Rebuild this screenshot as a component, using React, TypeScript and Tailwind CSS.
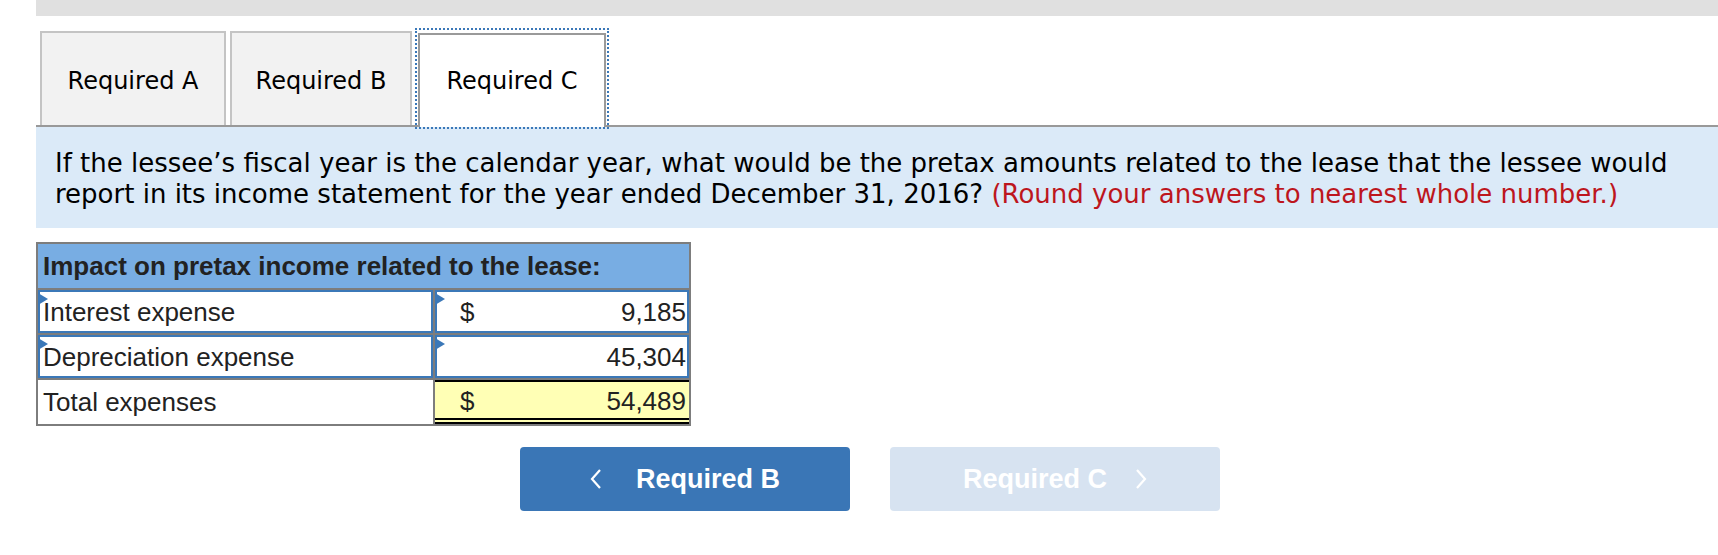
import React from "react";

const tabs = ["Required A", "Required B", "Required C"];

function Marker() {
  return (
    <svg width="10" height="12" viewBox="0 0 10 12" className="absolute left-[-2px] top-[1px]">
      <path d="M0 0 L10 6 L0 12 Z" fill="#3b78b8" />
    </svg>
  );
}

function Chevron({ dir }: { dir: "left" | "right" }) {
  return (
    <svg width="12" height="22" viewBox="0 0 12 22">
      <polyline
        points={dir === "left" ? "10,2 2,11 10,20" : "2,2 10,11 2,20"}
        fill="none"
        stroke="white"
        strokeWidth="2.2"
      />
    </svg>
  );
}

export default function App() {
  const sans = "font-['Liberation_Sans',Arial,sans-serif]";
  const verdana = "font-['DejaVu_Sans',Verdana,sans-serif]";

  return (
    <div className="w-[1718px] h-[555px] bg-white overflow-hidden">
      <div className="ml-[36px] h-[16px] bg-[#e0e0e0]" />

      <div className="ml-[36px] mt-[15px]">
        {/* tab strip */}
        <div className={`flex items-end gap-[4px] pl-[4px] border-b-2 border-[#999] ${verdana}`}>
          {tabs.map((t, i) =>
            i === 2 ? (
              <div key={t} className="relative ml-[2px]">
                <div className="absolute inset-x-[-3px] top-[-5px] bottom-[-4px] border-2 border-dotted border-[#3b78b8]" />
                <div className="w-[188px] h-[94px] mb-[-2px] bg-white border-2 border-b-0 border-[#9a9a9a] flex items-center justify-center text-[24px] text-black">
                  {t}
                </div>
              </div>
            ) : (
              <div
                key={t}
                className={`${i === 0 ? "w-[186px]" : "w-[182px]"} h-[94px] pt-[4px] bg-[#f2f2f2] border-2 border-b-0 border-[#c4c4c4] flex items-center justify-center text-[24px] text-black`}
              >
                {t}
              </div>
            )
          )}
        </div>

        {/* question */}
        <div className={`bg-[#dbeaf8] h-[101px] pl-[19px] pr-[10px] pt-[21px] text-[26px] leading-[31px] text-black whitespace-nowrap ${verdana}`}>
          If the lessee’s fiscal year is the calendar year, what would be the pretax amounts related to the lease that the lessee would
          <br />
          report in its income statement for the year ended December 31, 2016?{" "}
          <span className="text-[#bd161d]">(Round your answers to nearest whole number.)</span>
        </div>

        {/* table */}
        <div className={`mt-[14px] w-[655px] border-2 border-[#7d7d7d] bg-[#7d7d7d] flex flex-col gap-[2px] text-[#222] leading-none ${sans}`}>
          <div className="h-[44px] bg-[#78ade3] flex items-center px-[5px] text-[26px] font-bold">
            Impact on pretax income related to the lease:
          </div>

          <div className="grid grid-cols-[395px_1fr] grid-rows-[43px] gap-[2px]">
            <div className="relative bg-white border-2 border-[#3b78b8] flex items-center pl-[3px] text-[26px]">
              <Marker />
              Interest expense
            </div>
            <div className="relative bg-white border-2 border-[#3b78b8] flex items-center justify-between pl-[23px] pr-[1px] text-[26px]">
              <Marker />
              <span>$</span>
              <span>9,185</span>
            </div>
          </div>

          <div className="grid grid-cols-[395px_1fr] grid-rows-[43px] gap-[2px]">
            <div className="relative bg-white border-2 border-[#3b78b8] flex items-center pl-[3px] text-[26px]">
              <Marker />
              Depreciation expense
            </div>
            <div className="relative bg-white border-2 border-[#3b78b8] flex items-center justify-end pr-[1px] text-[26px]">
              <Marker />
              <span>45,304</span>
            </div>
          </div>

          <div className="grid grid-cols-[395px_1fr] grid-rows-[44px] gap-[2px]">
            <div className="bg-white flex items-center pl-[5px] text-[26px]">Total expenses</div>
            <div className="bg-[#ffffb5] border-t-2 border-b-[6px] border-double border-black flex items-center justify-between pl-[25px] pr-[3px] pt-[2px] text-[26px]">
              <span>$</span>
              <span>54,489</span>
            </div>
          </div>
        </div>

        {/* nav buttons */}
        <div className={`mt-[21px] pl-[484px] flex gap-[40px] ${sans}`}>
          <button className="w-[330px] h-[64px] rounded-[4px] bg-[#3a76b6] flex items-center justify-center gap-[34px] text-white font-bold text-[27px]">
            <Chevron dir="left" />
            <span>Required B</span>
          </button>
          <button className="w-[330px] h-[64px] rounded-[4px] bg-[#d7e3f1] flex items-center justify-center gap-[28px] text-white font-bold text-[27px]">
            <span>Required C</span>
            <Chevron dir="right" />
          </button>
        </div>
      </div>
    </div>
  );
}
